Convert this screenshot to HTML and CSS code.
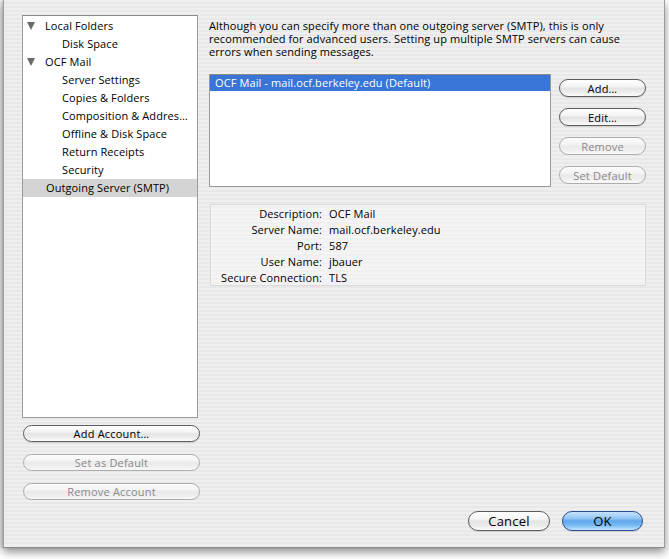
FILE: index.html
```html
<!DOCTYPE html>
<html>
<head>
<meta charset="utf-8">
<link rel="stylesheet" href="styles.css">
</head>
<body>
<div class="window">
  <div class="main">
    <div class="sidebar">
      <ul class="tree">
        <li class="row top"><span class="twisty"></span>Local Folders</li>
        <li class="row sub">Disk Space</li>
        <li class="row top"><span class="twisty"></span>OCF Mail</li>
        <li class="row sub">Server Settings</li>
        <li class="row sub">Copies &amp; Folders</li>
        <li class="row sub">Composition &amp; Addres…</li>
        <li class="row sub">Offline &amp; Disk Space</li>
        <li class="row sub">Return Receipts</li>
        <li class="row sub">Security</li>
        <li class="row plain selected">Outgoing Server (SMTP)</li>
      </ul>
      <div class="side-buttons">
        <button class="btn">Add Account…</button>
        <button class="btn" disabled>Set as Default</button>
        <button class="btn" disabled>Remove Account</button>
      </div>
    </div>
    <div class="content">
      <p class="intro">Although you can specify more than one outgoing server (SMTP), this is only recommended for advanced users. Setting up multiple SMTP servers can cause errors when sending messages.</p>
      <div class="servers">
        <div class="server-list">
          <div class="server selected">OCF Mail - mail.ocf.berkeley.edu (Default)</div>
        </div>
        <div class="server-buttons">
          <button class="btn">Add…</button>
          <button class="btn">Edit…</button>
          <button class="btn" disabled>Remove</button>
          <button class="btn" disabled>Set Default</button>
        </div>
      </div>
      <dl class="details">
        <dt>Description:</dt><dd>OCF Mail</dd>
        <dt>Server Name:</dt><dd>mail.ocf.berkeley.edu</dd>
        <dt>Port:</dt><dd>587</dd>
        <dt>User Name:</dt><dd>jbauer</dd>
        <dt>Secure Connection:</dt><dd>TLS</dd>
      </dl>
    </div>
  </div>
  <div class="footer">
    <button class="btn big">Cancel</button>
    <button class="btn big default">OK</button>
  </div>
</div>
</body>
</html>
```
FILE: styles.css
```css
* { box-sizing: border-box; }
html, body { margin: 0; padding: 0; }
body {
  background: #ffffff;
  width: 669px;
  height: 559px;
  overflow: hidden;
  font-family: "Open Sans", "DejaVu Sans", sans-serif;
  font-size: 11px;
  letter-spacing: 0.1px;
  color: #000;
}
.window {
  margin-left: 3px;
  width: 662px;
  height: 548px;
  background: repeating-linear-gradient(to bottom, #efefef 0, #efefef 2px, #e8e8e8 2px, #e8e8e8 4px);
  border-left: 1px solid #9c9c9c;
  border-right: 1px solid #9c9c9c;
  border-bottom: 1px solid #8c8c8c;
  box-shadow: 0 4px 9px rgba(0,0,0,0.45), -3px 0 2px rgba(0,0,0,0.12);
  padding: 15px 20px 0 18px;
  display: flex;
  flex-direction: column;
}
.main {
  display: flex;
  height: 485px;
}
.sidebar {
  width: 176px;
  display: flex;
  flex-direction: column;
}
.tree {
  list-style: none;
  margin: 0;
  padding: 1px 0 0;
  height: 403px;
  background: #fff;
  border: 1px solid #9d9d9d;
  border-top-color: #8a8a8a;
}
.row {
  height: 18px;
  line-height: 18px;
  white-space: nowrap;
  display: flex;
  align-items: center;
}
.top { padding-left: 4px; }
.sub { padding-left: 39px; }
.plain { padding-left: 23px; }
.selected.row { background: #d4d4d4; }
.twisty {
  width: 0;
  height: 0;
  border-left: 4.5px solid transparent;
  border-right: 4.5px solid transparent;
  border-top: 8px solid #6a6a6a;
  margin-right: 10px;
}
.side-buttons {
  display: flex;
  flex-direction: column;
  gap: 12px;
  margin-top: 7px;
  padding-left: 1px;
}
.side-buttons .btn { width: 177px; height: 17px; }

.btn {
  font-family: "Open Sans", "DejaVu Sans", sans-serif;
  font-size: 11px;
  letter-spacing: 0.2px;
  line-height: 1;
  color: #000;
  height: 18px;
  padding: 0;
  border: 1px solid #5c5c5c;
  border-radius: 9px;
  background: linear-gradient(to bottom, #ffffff 0%, #f4f4f4 40%, #e4e4e4 52%, #ececec 75%, #fbfbfb 100%);
  box-shadow: 0 1px 1px rgba(0,0,0,0.12);
}
.btn:disabled {
  border-color: #adadad;
  color: #8a8a8a;
  background: linear-gradient(to bottom, #fbfbfb 0%, #f3f3f3 40%, #e9e9e9 52%, #efefef 75%, #f8f8f8 100%);
  box-shadow: none;
}

.content {
  margin-left: 11px;
  width: 437px;
  padding-top: 4px;
}
.intro {
  margin: 0;
  line-height: 13px;
}
.servers {
  display: flex;
  margin-top: 16px;
}
.server-list {
  width: 342px;
  height: 113px;
  background: #fff;
  border: 1px solid #9a9a9a;
  border-top-color: #8a8a8a;
}
.server {
  height: 16px;
  line-height: 16px;
  padding-left: 5px;
  white-space: nowrap;
}
.server.selected { background: #3875d7; color: #fff; }
.server-buttons {
  margin-left: 8px;
  padding-top: 5px;
  display: flex;
  flex-direction: column;
  gap: 11px;
}
.server-buttons .btn { width: 87px; }

.details {
  margin: 17px 0 0 1px;
  width: 436px;
  height: 82px;
  padding: 1px 0 0;
  background: rgba(255,255,255,0.35);
  border: 1px solid #dadada;
  display: grid;
  grid-template-columns: 111px 1fr;
  column-gap: 7px;
  grid-auto-rows: 16px;
  line-height: 16px;
}
.details dt { text-align: right; margin: 0; white-space: nowrap; }
.details dd { margin: 0; }

.footer {
  display: flex;
  justify-content: flex-end;
  gap: 12px;
  margin-top: 11px;
  padding-right: 1px;
}
.btn.big {
  width: 82px;
  height: 20px;
  border-radius: 10px;
  font-size: 13px;
}
.btn.default {
  width: 81px;
  border-color: #2f4d8c;
  background: linear-gradient(to bottom, #c6e2fb 0%, #93c7f5 35%, #5ea6ec 50%, #7bbdf3 75%, #bfe6ff 100%);
}
```
